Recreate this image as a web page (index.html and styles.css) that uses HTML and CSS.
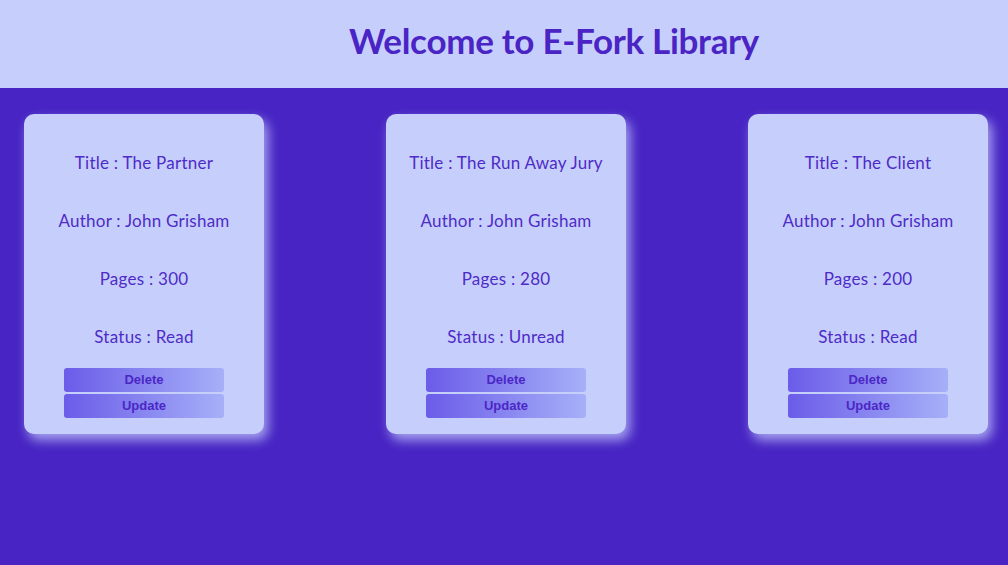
FILE: index.html
```html
<!DOCTYPE html>
<html>
<head>
<meta charset="utf-8">
<link rel="stylesheet" href="styles.css">
</head>
<body>
<header class="top">
  <h1 class="heading">Welcome to E-Fork Library</h1>
</header>
<main class="shelf">
  <div class="card">
    <p class="field">Title : The Partner</p>
    <p class="field">Author : John Grisham</p>
    <p class="field">Pages : 300</p>
    <p class="field">Status : Read</p>
    <div class="actions">
      <button class="btn">Delete</button>
      <button class="btn">Update</button>
    </div>
  </div>
  <div class="card">
    <p class="field">Title : The Run Away Jury</p>
    <p class="field">Author : John Grisham</p>
    <p class="field">Pages : 280</p>
    <p class="field">Status : Unread</p>
    <div class="actions">
      <button class="btn">Delete</button>
      <button class="btn">Update</button>
    </div>
  </div>
  <div class="card">
    <p class="field">Title : The Client</p>
    <p class="field">Author : John Grisham</p>
    <p class="field">Pages : 200</p>
    <p class="field">Status : Read</p>
    <div class="actions">
      <button class="btn">Delete</button>
      <button class="btn">Update</button>
    </div>
  </div>
</main>
</body>
</html>
```
FILE: styles.css
```css
html, body {
  margin: 0;
  padding: 0;
}
body {
  background: #4724c3;
  font-family: "Lato", "Noto Sans", sans-serif;
  height: 565px;
  overflow: hidden;
}
.top {
  background: #c6cffb;
  height: 88px;
  box-sizing: border-box;
  display: flex;
  align-items: center;
  justify-content: center;
  padding: 0 0 8px 100px;
}
.heading {
  margin: 0;
  color: #4a24c4;
  font-size: 35px;
  font-weight: 700;
  letter-spacing: -0.3px;
}
.shelf {
  display: flex;
  gap: 122px;
  padding: 26px 20px 0 24px;
}
.card {
  width: 240px;
  height: 320px;
  box-sizing: border-box;
  background: #c6cffb;
  border-radius: 10px;
  box-shadow: 4px 6px 12px rgba(200, 208, 255, 0.75);
  padding-top: 39px;
  display: flex;
  flex-direction: column;
  align-items: center;
}
.field {
  margin: 0 0 38px;
  line-height: 20px;
  font-size: 17px;
  letter-spacing: 0.25px;
  color: #4e2bc8;
}
.field:nth-child(4) {
  margin-bottom: 21px;
}
.actions {
  display: flex;
  flex-direction: column;
  gap: 2px;
}
.btn {
  width: 160px;
  height: 24px;
  border: none;
  border-radius: 3px;
  background: linear-gradient(to right, #6b5ce9, #a6b0f8);
  color: #4b27c6;
  font-family: "Liberation Sans", Arial, sans-serif;
  font-weight: 700;
  font-size: 13px;
  padding: 0 0 2px;
}
```
